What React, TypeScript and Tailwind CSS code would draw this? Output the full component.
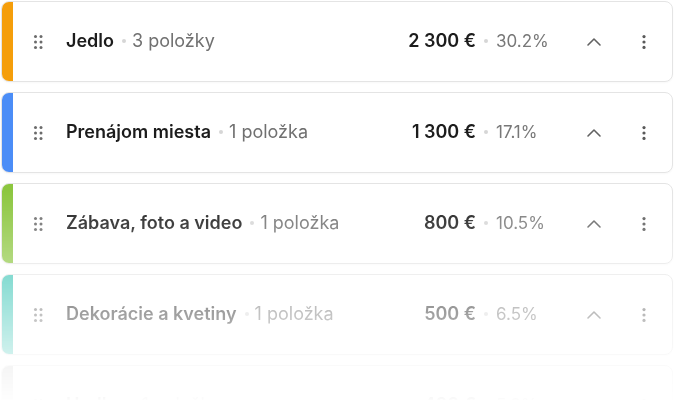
import React from "react";

type Row = { title: string; count: string; price: string; pct: string; color: string };

const rows: Row[] = [
  { title: "Jedlo", count: "3 položky", price: "2 300 €", pct: "30.2%", color: "bg-[#f59e0b]" },
  { title: "Prenájom miesta", count: "1 položka", price: "1 300 €", pct: "17.1%", color: "bg-[#4b8df7]" },
  { title: "Zábava, foto a video", count: "1 položka", price: "800 €", pct: "10.5%", color: "bg-[#8cc63f]" },
  { title: "Dekorácie a kvetiny", count: "1 položka", price: "500 €", pct: "6.5%", color: "bg-[#34c3b3]" },
  { title: "Hudba", count: "1 položka", price: "400 €", pct: "5.3%", color: "bg-[#c4c4c4]" },
];

function Grip() {
  return (
    <svg width="12" height="16" viewBox="0 0 12 16" className="text-[#6b6b6b]">
      {[2.5, 8].map((x) =>
        [2.5, 8, 13.5].map((y) => <circle key={`${x}-${y}`} cx={x} cy={y} r="1.5" fill="currentColor" />)
      )}
    </svg>
  );
}

function Chevron() {
  return (
    <svg width="24" height="24" viewBox="0 0 24 24" fill="none" stroke="currentColor" strokeWidth="1.6" strokeLinecap="round" strokeLinejoin="round" className="text-[#626262]">
      <path d="m18 15-6-6-6 6" />
    </svg>
  );
}

function Kebab() {
  return (
    <svg width="6" height="16" viewBox="0 0 6 16" className="text-[#5a5a5a]">
      <circle cx="3" cy="2.6" r="1.6" fill="currentColor" />
      <circle cx="3" cy="8" r="1.6" fill="currentColor" />
      <circle cx="3" cy="13.4" r="1.6" fill="currentColor" />
    </svg>
  );
}

export default function App() {
  return (
    <div className="h-[400px] w-[674px] overflow-hidden bg-white font-['Inter','Liberation_Sans',sans-serif]">
      <div className="flex flex-col gap-[10px] px-px pt-px [mask-image:linear-gradient(to_bottom,#000_190px,transparent_404px)] [-webkit-mask-image:linear-gradient(to_bottom,#000_190px,transparent_404px)]">
        {rows.map((r) => (
          <div
            key={r.title}
            className="flex h-[81px] shrink-0 items-stretch overflow-hidden rounded-lg border border-[#e4e4e4] bg-white shadow-[0_1px_2px_rgba(0,0,0,0.03)]"
          >
            <div className={`w-[11px] shrink-0 ${r.color}`} />
            <div className="flex flex-1 items-center">
              <div className="ml-[20px] flex w-[12px] items-center justify-center">
                <Grip />
              </div>
              <div className="ml-[21px] flex min-w-0 flex-1 items-center pb-px text-[18px] leading-6">
                <span className="font-semibold text-[#1c1c1c]">{r.title}</span>
                <span className="ml-2 mr-[6px] h-[4px] w-[4px] shrink-0 rounded-full bg-[#d6d6d6]" />
                <span className="text-[#707070]">{r.count}</span>
              </div>
              <div className="flex items-center pb-px leading-6">
                <span className="text-[18px] font-semibold text-[#1c1c1c]">{r.price}</span>
                <span className="mx-2 h-[4px] w-[4px] shrink-0 rounded-full bg-[#d6d6d6]" />
                <span className="w-[66px] text-[17px] text-[#787878]">{r.pct}</span>
              </div>
              <div className="ml-[16px] flex h-8 w-8 items-center justify-center">
                <Chevron />
              </div>
              <div className="ml-[18px] flex h-8 w-8 items-center justify-center">
                <Kebab />
              </div>
              <div className="w-[12px]" />
            </div>
          </div>
        ))}
      </div>
    </div>
  );
}
